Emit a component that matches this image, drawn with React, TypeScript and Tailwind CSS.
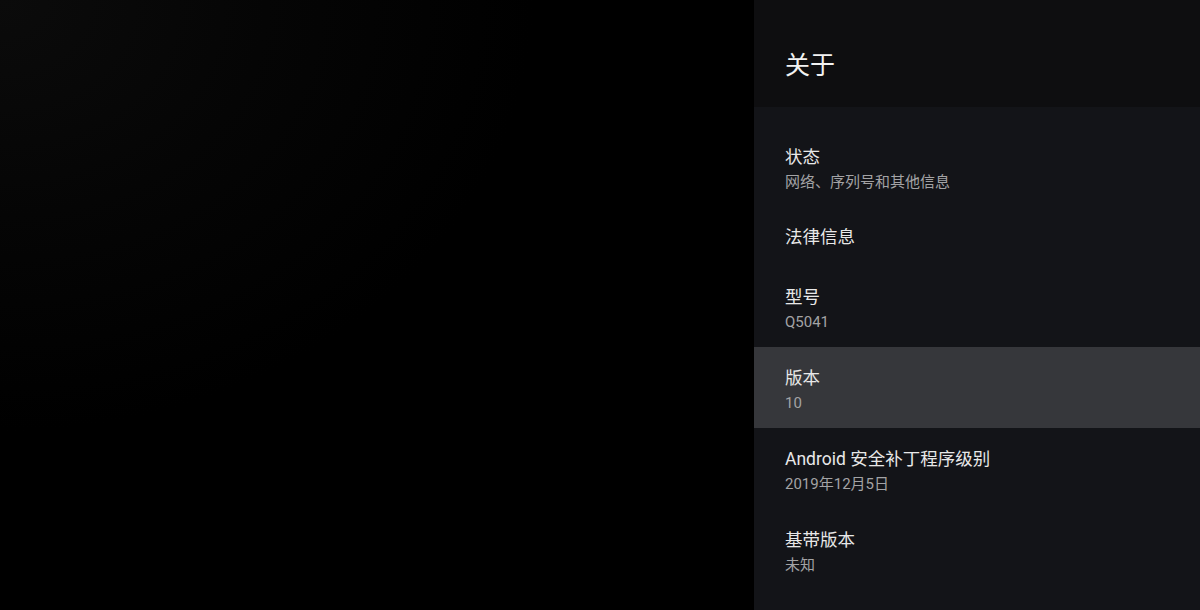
import React from "react";

const rows: { title: string; sub?: string; active?: boolean }[] = [
  { title: "状态", sub: "网络、序列号和其他信息" },
  { title: "法律信息" },
  { title: "型号", sub: "Q5041" },
  { title: "版本", sub: "10", active: true },
  { title: "Android 安全补丁程序级别", sub: "2019年12月5日" },
  { title: "基带版本", sub: "未知" },
];

export default function App() {
  return (
    <div
      className="flex h-[610px] w-[1200px] overflow-hidden bg-black"
      style={{ fontFamily: "Roboto, 'Noto Sans CJK SC', sans-serif" }}
    >
      <div className="flex-1 bg-[radial-gradient(ellipse_at_top_left,#0b0b0b_0%,#050505_25%,#000_50%)]" />
      <div className="flex w-[446px] flex-col">
        <div className="flex h-[107px] flex-col bg-[#0e0e10] pl-[31px] pt-[51px]">
          <span className="text-[25px] leading-[30px] text-[#f2f2f2]">关于</span>
        </div>
        <div className="flex-1 bg-[#131418] pt-[19px]">
          {rows.map((r) => (
            <div
              key={r.title}
              className={
                "flex flex-col pl-[31px] " +
                (r.sub ? "pt-[20px] pb-[16px] " : "pt-[19px] pb-[18px] ") +
                (r.active ? "bg-[#36373b]" : "")
              }
            >
              <span className="text-[17.5px] leading-[22px] text-[#e8e8e8]">{r.title}</span>
              {r.sub && (
                <span className="mt-[5px] text-[15px] leading-[18px] text-[#a3a3a5]">{r.sub}</span>
              )}
            </div>
          ))}
        </div>
      </div>
    </div>
  );
}
